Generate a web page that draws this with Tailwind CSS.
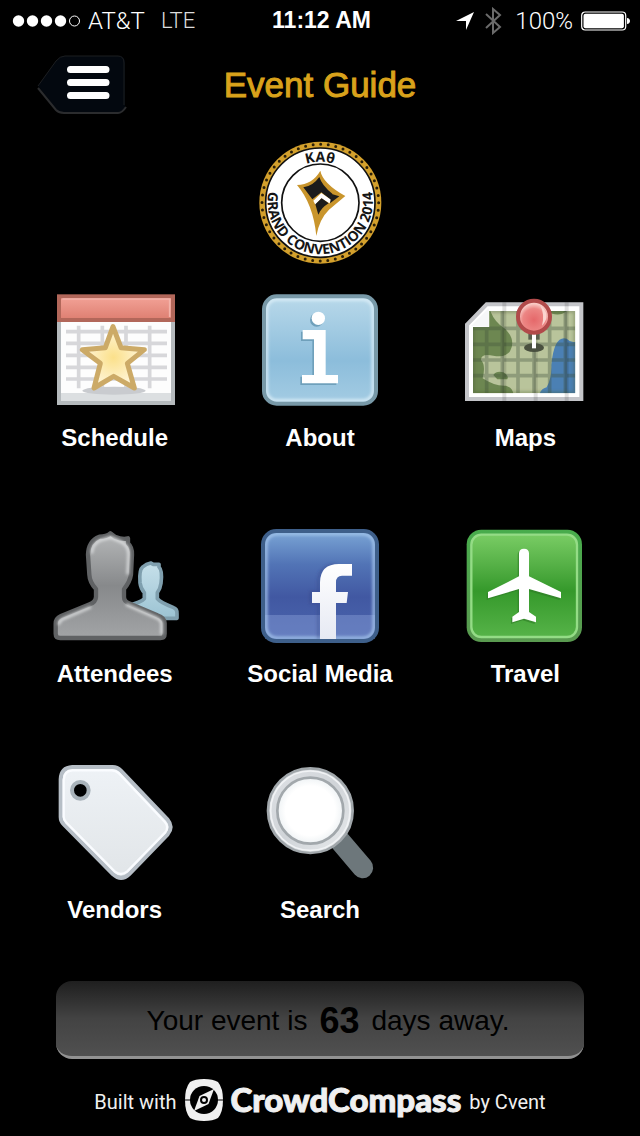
<!DOCTYPE html>
<html lang="en">
<head>
    <meta charset="UTF-8">
    <meta name="viewport" content="width=device-width, initial-scale=1.0">
    <title>Event Guide</title>
    <script src="https://cdn.jsdelivr.net/npm/@tailwindcss/browser@4"></script>
</head>
<body class="bg-black text-white min-h-screen flex flex-col font-['Liberation_Sans',Arial,sans-serif]">

    <!-- Status Bar -->
    <div class="grid grid-cols-[1fr_auto_1fr] items-center h-[41px] pl-3 pr-[9px] text-2xl">
        <div class="flex items-center font-['Roboto',sans-serif] font-light">
            <svg class="w-[70px] h-4 mr-[6px]" viewBox="0 0 70 16" fill="#fff">
                <circle cx="6.500" cy="8" r="5.700"/>
                <circle cx="20.500" cy="8" r="5.700"/>
                <circle cx="34.500" cy="8" r="5.700"/>
                <circle cx="48.500" cy="8" r="5.700"/>
                <circle cx="62.500" cy="8" r="5" fill="none" stroke="#fff" stroke-width="1"/>
            </svg>
            <span>AT&amp;T</span>
            <span class="ml-4 text-[22px] text-[#dcdcdc]">LTE</span>
        </div>
        <div class="font-bold text-[23px]">11:12 AM</div>
        <div class="flex items-center justify-end">
            <svg class="w-5 h-5 mr-2" viewBox="0 0 20 20"><path d="M19 1 11 19V10H1Z" fill="#fff"/></svg>
            <svg class="w-5 h-7 mr-3" viewBox="0 0 20 28" fill="none" stroke="#6b6b6b" stroke-width="2"><path d="M3 7 17 20 10 26V2L17 8 3 21"/></svg>
            <span class="font-['Roboto',sans-serif] font-light">100%</span>
            <svg class="w-[50px] h-5 ml-2" viewBox="0 0 50 20">
                <rect x=".7" y="1" width="44" height="18" rx="3.500" fill="none" stroke="#fff" stroke-width="1.200"/>
                <rect x="2.500" y="2.800" width="40.400" height="14.400" rx="2" fill="#fff"/>
                <path d="M46 7c4 0 4 6 0 6Z" fill="#fff"/>
            </svg>
        </div>
    </div>

    <!-- Header -->
    <header class="grid grid-cols-[1fr_auto_1fr] items-center h-[88px] px-9">
        <button type="button" aria-label="Menu" class="justify-self-start">
            <svg class="w-[92px] h-[62px]" viewBox="0 -1 92 62">
                <path d="M2 31 20 6Q24 1 29 1H82Q89 1 89 8V51Q89 58 82 58H28Q24 58 20 54Z" fill="#03080f"/>
                <path d="M2 31 20 6Q24 1 29 1H82Q88 1 88 8V50" fill="none" stroke="#1c1e21"/>
                <path d="M2 33 20 55Q23 58 28 58H82Q86 58 90 52" fill="none" stroke="#2b2c2e" stroke-width="2"/>
                <path d="M34.500 14.500H70M34.500 27.500H70M34.500 40.500H70" stroke="#fff" stroke-width="7" stroke-linecap="round"/>
            </svg>
        </button>
        <h1 class="text-[35px] leading-10 text-[#d9a21b] [-webkit-text-stroke:1px_#d9a21b]">Event Guide</h1>
    </header>

    <!-- Convention Badge -->
    <div class="flex justify-center pt-[6px]">
        <svg class="w-[140px] h-[136px]" viewBox="0 0 420 408">
            <defs>
                <path id="badge-top" d="M87 203A123 123 0 0 1 333 203"/>
                <path id="badge-bottom" d="M58 160A158 158 0 1 0 364 160"/>
            </defs>
            <circle cx="211" cy="203" r="183" fill="#d3a02c"/>
            <circle cx="211" cy="203" r="175" fill="none" stroke="#2b1f08" stroke-width="9" stroke-linecap="round" stroke-dasharray="0 22.900"/>
            <circle cx="211" cy="203" r="164" fill="#fff" stroke="#111" stroke-width="5"/>
            <circle cx="211" cy="203" r="116" fill="none" stroke="#111" stroke-width="5"/>
            <g class="font-['Open_Sans',sans-serif] font-bold" fill="#151515" text-anchor="middle">
                <text font-size="42"><textPath href="#badge-top" startOffset="50%">KAθ</textPath></text>
                <text font-size="42"><textPath href="#badge-bottom" startOffset="50%">GRAND CONVENTION 2014</textPath></text>
            </g>
            <path d="M211 107Q218 145 286 183L237 224Q208 252 199 303Q190 208 141 150Q188 148 211 107Z" fill="#c9952c"/>
            <path d="M160 157Q189 153 208 126Q216 152 247 176L243 195 214 172 187 193Z" fill="#1b1b1b"/>
            <path d="M190 197 214 174 245 196 238 205 214 190 196 209Z" fill="#fff"/>
            <path d="M196 208 215 190 236 205Q213 219 205 239Z" fill="#1b1b1b"/>
            <path d="M245 177 268 184 240 205Z" fill="#1b1b1b"/>
        </svg>
    </div>

    <!-- Menu Icons -->
    <nav class="grid grid-cols-3 gap-y-[68px] px-3 pt-[14px] text-2xl leading-[30px] font-bold text-center">
        <a href="#schedule" class="flex flex-col items-center gap-2">
            <svg class="w-[150px] h-[130px]" viewBox="0 0 450 390">
                <defs>
                    <linearGradient id="red" x2="0" y2="1"><stop stop-color="#f3a398"/><stop offset="1" stop-color="#dd7e70"/></linearGradient>
                    <radialGradient id="star"><stop stop-color="#fbe08a"/><stop offset="1" stop-color="#fff6dc"/></radialGradient>
                </defs>
                <rect x="57" y="105" width="342" height="249" fill="#fdfdfd" stroke="#b5babd" stroke-width="12"/>
                <path d="M63 324H393V348H63Z" fill="#dcdfe1"/>
                <path d="M78 140H381M78 175H381M78 211H381M78 247H381M78 282H381M116 122V310M187 122V310M258 122V310M329 122V310" stroke="#c9cace" stroke-opacity=".75" stroke-width="11"/>
                <rect x="57" y="34" width="342" height="71" fill="url(#red)" stroke="#b2675a" stroke-width="12"/>
                <path d="M67 42H389V96" fill="none" stroke="#f3b4aa" stroke-width="5"/>
                <ellipse cx="222" cy="317" rx="95" ry="12" fill="#c9cbcf"/>
                <path d="M219 125 243 188 313 194 262 235 283 309 221 274 162 309 181 235 127 194 196 188Z" fill="url(#star)" stroke="#ccaa67" stroke-width="15" stroke-linejoin="round"/>
            </svg>
            <span>Schedule</span>
        </a>
        <a href="#about" class="flex flex-col items-center gap-2">
            <svg class="w-[150px] h-[130px]" viewBox="0 0 450 390">
                <defs>
                    <linearGradient id="sky" x2="0" y2="1"><stop stop-color="#b9d9ea"/><stop offset=".6" stop-color="#8cbddb"/><stop offset="1" stop-color="#a4cce3"/></linearGradient>
                    <filter id="soft"><feGaussianBlur stdDeviation="4"/></filter>
                </defs>
                <rect x="57" y="34" width="336" height="322" rx="38" fill="url(#sky)"/>
                <rect x="65" y="43" width="319" height="304" rx="30" fill="none" stroke="#dbeef8" stroke-width="8" filter="url(#soft)"/>
                <rect x="57" y="34" width="336" height="322" rx="38" fill="none" stroke="#7899a8" stroke-width="12"/>
                <g fill="#6fa0bb" transform="translate(-5 5)"><circle cx="220" cy="100" r="20"/><path d="M173 135H242V270H279V295H171V270H207V163H173Z"/></g>
                <g fill="#fff"><circle cx="220" cy="100" r="20"/><path d="M173 135H242V270H279V295H171V270H207V163H173Z"/></g>
            </svg>
            <span>About</span>
        </a>
        <a href="#maps" class="flex flex-col items-center gap-2">
            <svg class="w-[150px] h-[130px]" viewBox="0 0 450 390">
                <defs>
                    <clipPath id="map-clip"><path d="M118 78H376V325H69V126H118Z"/></clipPath>
                    <radialGradient id="pin" cx=".5" cy=".6"><stop stop-color="#e5686a"/><stop offset=".7" stop-color="#ec8684"/><stop offset="1" stop-color="#f9c9c4"/></radialGradient>
                </defs>
                <path d="M51 119 110 58H394V342H51Z" fill="#fff" stroke="#c4c5c9" stroke-width="12"/>
                <g clip-path="url(#map-clip)">
                    <path d="M60 70H380V330H60Z" fill="#b9c49b"/>
                    <path d="M60 70H118Q132 112 165 131Q199 165 180 199Q166 219 130 212Q92 204 93 225Q108 240 98 280Q133 304 168 302Q190 309 190 330H60Z" fill="#6d8751"/>
                    <path d="M130 270Q140 256 160 262Q178 272 172 283H142Z" fill="#6d8751"/>
                    <path d="M290 78Q325 99 350 78Z" fill="#6d8751"/>
                    <path d="M318 178Q330 155 350 161Q366 177 380 168V330H268Q272 311 290 307Q305 280 304 240Q308 199 318 178Z" fill="#4b80b4"/>
                    <path d="M69 130H376M69 178H376M69 225H376M69 272H376M110 78V325M157 78V325M204 78V325M252 78V325M299 78V325M346 78V325" stroke="#3e4f3c" stroke-opacity=".35" stroke-width="11"/>
                    <path d="M118 78H376V325H69V126" fill="none" stroke="#3e5030" stroke-opacity=".3" stroke-width="12" filter="url(#soft)"/>
                </g>
                <path d="M63 123 116 70V125Z" fill="#f6f7f8"/>
                <path d="M163 52V348M257 52V348M350 52V348" stroke="#000" stroke-opacity=".12" stroke-width="12"/>
                <ellipse cx="252" cy="188" rx="30" ry="13" fill="#49503f"/>
                <path d="M235 138H269V164H235Z" fill="#5b604f"/>
                <path d="M246 144H258V190H246Z" fill="#fff"/>
                <circle cx="252" cy="95" r="48" fill="url(#pin)" stroke="#b14a4a" stroke-width="12"/>
                <path d="M271 61Q306 91 276 122Q285 90 271 61Z" fill="#fbd5d0"/>
            </svg>
            <span>Maps</span>
        </a>
        <a href="#attendees" class="flex flex-col items-center gap-2">
            <svg class="w-[150px] h-[130px]" viewBox="0 3 450 390">
                <defs>
                    <linearGradient id="gray" x2="0" y2="1"><stop stop-color="#b5b7b8"/><stop offset=".5" stop-color="#87898b"/><stop offset="1" stop-color="#a2a4a6"/></linearGradient>
                    <linearGradient id="pale" x2="0" y2="1"><stop stop-color="#c6e0ea"/><stop offset="1" stop-color="#9cc3d3"/></linearGradient>
                </defs>
                <path d="M332 129 340 133 357 133 357 141Q368 151 363 190Q361 206 352 218V236Q360 247 401 263Q412 267 411 281V295H260V258Q306 246 313 236V218Q302 205 300 188Q297 149 308 141Q319 131 332 129Z" fill="url(#pale)" stroke="#7f9fae" stroke-width="11" stroke-linejoin="round"/>
                <path d="M211 40 225 50Q248 60 264 55L264 70Q277 82 276 104L273 164Q270 185 252 207V231Q252 244 267 250L352 286Q374 293 374 310V341Q374 354 361 354H61Q47 354 47 341V311Q47 295 63 288L149 253Q167 246 168 231V207Q149 187 148 164L144 104Q145 63 178 50Q200 50 211 40Z" fill="url(#gray)" stroke="#606264" stroke-width="13" stroke-linejoin="round"/>
                <path d="M56 314Q58 301 71 296L153 261M258 253 348 293Q364 300 365 312V343M155 100Q157 70 183 60L212 52 240 64Q266 74 266 103L263 163" fill="none" stroke="#e2e4e5" stroke-width="7" filter="url(#soft)"/>
            </svg>
            <span>Attendees</span>
        </a>
        <a href="#social" class="flex flex-col items-center gap-2">
            <svg class="w-[150px] h-[130px]" viewBox="0 3 450 390">
                <defs>
                    <linearGradient id="blue" x2="0" y2="1"><stop stop-color="#7ba6d6"/><stop offset=".3" stop-color="#5274b6"/><stop offset=".6" stop-color="#4158a2"/><stop offset="1" stop-color="#4c66ae"/></linearGradient>
                    <linearGradient id="fb" x2="0" y2="1"><stop stop-color="#fff"/><stop offset="1" stop-color="#e6e9f3"/></linearGradient>
                </defs>
                <rect x="54" y="33" width="342" height="330" rx="40" fill="url(#blue)"/>
                <path d="M60 285H390V357H60Z" fill="#8ea4dc" fill-opacity=".4"/>
                <rect x="63" y="42" width="324" height="312" rx="32" fill="none" stroke="#a5c6ec" stroke-width="8" filter="url(#soft)"/>
                <path d="M220 357V249H196V216H220V184Q222 136 275 133" fill="none" stroke="#35488c" stroke-width="7" stroke-opacity=".5" filter="url(#soft)"/>
                <path d="M225 357V249H201V216H225V187Q226 132 282 132H321V167H291Q273 167 273 187V216H309L305 249H273V357Z" fill="url(#fb)"/>
                <rect x="54" y="33" width="342" height="330" rx="40" fill="none" stroke="#3e5f8a" stroke-width="12"/>
            </svg>
            <span>Social Media</span>
        </a>
        <a href="#travel" class="flex flex-col items-center gap-2">
            <svg class="w-[150px] h-[130px]" viewBox="0 3 450 390">
                <defs>
                    <linearGradient id="green" x2="0" y2="1"><stop stop-color="#79cc64"/><stop offset=".3" stop-color="#55b046"/><stop offset=".55" stop-color="#35992b"/><stop offset="1" stop-color="#56b348"/></linearGradient>
                    <linearGradient id="green-edge" x2="0" y2="1"><stop stop-color="#48ac4c"/><stop offset="1" stop-color="#5a9a50"/></linearGradient>
                </defs>
                <rect x="50" y="29" width="346" height="337" rx="44" fill="url(#green-edge)"/>
                <rect x="64" y="44" width="317" height="307" rx="30" fill="url(#green)" stroke="#94dc86" stroke-width="7"/>
                <path d="M207 100Q207 86 222 86Q237 86 237 100V169L333 216V235L237 207V276L258 290V307L222 296 187 307V290L207 276V207L114 235V216L207 169Z" fill="#2f7c27" fill-opacity=".6" transform="translate(-4 5)"/>
                <path d="M207 100Q207 86 222 86Q237 86 237 100V169L333 216V235L237 207V276L258 290V307L222 296 187 307V290L207 276V207L114 235V216L207 169Z" fill="#fff"/>
            </svg>
            <span>Travel</span>
        </a>
        <a href="#vendors" class="flex flex-col items-center gap-2">
            <svg class="w-[150px] h-[130px]" viewBox="0 6 450 390">
                <defs>
                    <linearGradient id="tag" x2="0" y2="1"><stop stop-color="#eef2f6"/><stop offset="1" stop-color="#e1e5e8"/></linearGradient>
                </defs>
                <path d="M97 36H218Q232 36 242 46L382 193Q401 216 383 238L268 357Q244 380 219 358L72 209Q62 199 62 186V73Q63 38 97 36Z" fill="url(#tag)" stroke="#b6bec6" stroke-width="12"/>
                <path d="M98 46H214Q228 46 237 55L374 200Q389 217 375 233L262 349Q244 364 226 351L79 203Q71 195 71 185V75Q72 47 98 46Z" fill="none" stroke="#fafcff" stroke-width="7"/>
                <circle cx="121" cy="106" r="25" fill="#000" stroke="#a9b3ba" stroke-width="12"/>
            </svg>
            <span>Vendors</span>
        </a>
        <a href="#search" class="flex flex-col items-center gap-2">
            <svg class="w-[150px] h-[130px]" viewBox="0 6 450 390">
                <defs>
                    <linearGradient id="rim" x2="1" y2="1"><stop stop-color="#dfe2e6"/><stop offset=".5" stop-color="#d0d4d8"/><stop offset="1" stop-color="#e8ebed"/></linearGradient>
                    <radialGradient id="lens"><stop offset=".75" stop-color="#fff"/><stop offset="1" stop-color="#eff3f5"/></radialGradient>
                </defs>
                <path d="M280 252 353 338" stroke="#6d777b" stroke-width="63" stroke-linecap="round"/>
                <circle cx="196" cy="167" r="127" fill="url(#rim)" stroke="#a1a7ab" stroke-width="8"/>
                <circle cx="196" cy="167" r="119" fill="none" stroke="#f1f3f5" stroke-width="5"/>
                <circle cx="196" cy="167" r="99" fill="url(#lens)" stroke="#a2a8ac" stroke-width="8"/>
            </svg>
            <span>Search</span>
        </a>
    </nav>

    <!-- Countdown -->
    <div class="mx-14 mt-14 h-[78px] pl-4 pt-1 rounded-2xl border-b-3 border-[#929292] bg-linear-to-b from-[#1f1f1f] via-[#434343] to-[#505050] text-black flex items-center justify-center gap-3 text-[28px]">
        <span>Your event is</span>
        <strong class="text-4xl">63</strong>
        <span>days away.</span>
    </div>

    <!-- Footer -->
    <footer class="flex items-center justify-center h-[77px] pt-1 text-xl text-[#f0f0f0] font-['Roboto',sans-serif]">
        <span class="pt-1">Built with</span>
        <svg class="w-[38px] h-[42px] ml-2" viewBox="0 0 38 42">
            <path d="M19 0Q28 0 33 3Q38 9 38 21Q38 33 33 39Q28 42 19 42Q10 42 5 39Q0 33 0 21Q0 9 5 3Q10 0 19 0Z" fill="#f0f0f0"/>
            <circle cx="19" cy="21" r="14" fill="#000"/>
            <path d="M0 21H8M30 21H38" stroke="#000" stroke-width="1"/>
            <path d="M29 10 23.500 25 9 32 14.500 17Z" fill="#f0f0f0"/>
            <circle cx="19" cy="21" r="3" fill="#f0f0f0" stroke="#000" stroke-width="2"/>
        </svg>
        <span class="mx-2 font-['Lato',sans-serif] font-black text-[33px] [-webkit-text-stroke:1px_#f0f0f0]">CrowdCompass</span>
        <span class="pt-1">by Cvent</span>
    </footer>

</body>
</html>
